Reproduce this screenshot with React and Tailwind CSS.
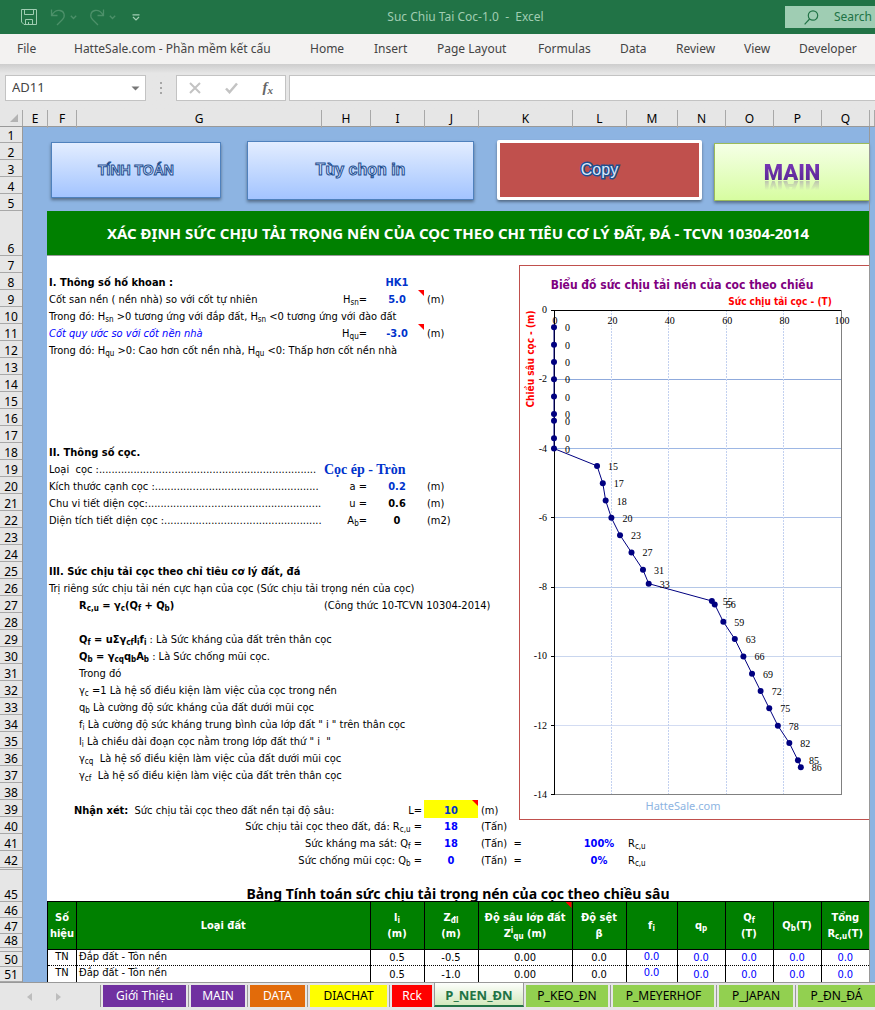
const COLS = 'grid grid-cols-[29px_minmax(0,1fr)_49px_54px_54px_94px_54px_51px_48px_48px_48px_48px]';
const INFO_COLS = 'grid grid-cols-[29px_minmax(0,1fr)_49px_54px_54px_41px]';

const COLUMN_LETTERS = ['F', 'G', 'H', 'I', 'J', 'K', 'L', 'M', 'N', 'O', 'P', 'Q'];

const range = (from, to) => Array.from({ length: to - from + 1 }, (_, i) => from + i);

const ROW_HEADERS = [
  { n: 1, h: 'h-[16px]' },
  ...range(2, 5).map((n) => ({ n, h: 'h-[17px]' })),
  { n: 6, h: 'h-[45px]' },
  ...range(7, 42).map((n) => ({ n, h: 'h-[17px]' })),
  { n: '', h: 'h-[2px]' },
  { n: 45, h: 'h-[32px]' },
  { n: 46, h: 'h-[16px]' },
  { n: 47, h: 'h-[16px]' },
  { n: 48, h: 'h-[14px]' },
  { n: '', h: 'h-[4px]' },
  { n: 50, h: 'h-[15px]' },
  { n: 51, h: 'h-[15px]' },
];

const MENU = [
  { label: 'File', cls: 'w-[57px] pl-[17px]' },
  { label: 'HatteSale.com - Phần mềm kết cấu', cls: 'w-[236px] pl-[17px]' },
  { label: 'Home', cls: 'w-[64px] pl-[17px]' },
  { label: 'Insert', cls: 'w-[63px] pl-[17px]' },
  { label: 'Page Layout', cls: 'w-[101px] pl-[17px]' },
  { label: 'Formulas', cls: 'w-[82px] pl-[17px]' },
  { label: 'Data', cls: 'w-[56px] pl-[17px]' },
  { label: 'Review', cls: 'w-[68px] pl-[17px]' },
  { label: 'View', cls: 'w-[55px] pl-[17px]' },
  { label: 'Developer', cls: 'w-[93px] pl-[17px]' },
];

const POINTS = [
  [0, 0.5], [0, 1], [0, 1.5], [0, 2], [0, 2.5], [0, 3], [0, 3.2], [0, 3.7], [0, 4],
  [15, 4.5], [17, 5], [18, 5.5], [20, 6], [23, 6.5], [27, 7], [31, 7.5], [33, 7.9],
  [55, 8.4], [56, 8.5], [59, 9], [63, 9.5], [66, 10], [69, 10.5], [72, 11], [75, 11.5],
  [78, 12], [82, 12.5], [85, 13], [86, 13.2],
];

const TABLE_ROWS = [
  ['TN', 'Đắp đất - Tôn nền', '0.5', '-0.5', '0.00', '0.0', '0.0', '0.0', '0.0', '0.0', '0.0'],
  ['TN', 'Đắp đất - Tôn nền', '0.5', '-1.0', '0.00', '0.0', '0.0', '0.0', '0.0', '0.0', '0.0'],
];

const SHEET_TABS = [
  { name: 'Giới Thiệu', cls: 'w-[83px] bg-[#7030a0] text-white' },
  { name: 'MAIN', cls: 'w-[54px] bg-[#7030a0] text-white' },
  { name: 'DATA', cls: 'w-[55px] bg-[#e26b0a] text-white' },
  { name: 'DIACHAT', cls: 'w-[77px] bg-[#ffff00] text-black' },
  { name: 'Rck', cls: 'w-[40px] bg-[#ff0000] text-white' },
];

const SHEET_TABS_AFTER = [
  { name: 'P_KEO_ĐN', cls: 'w-[82px]' },
  { name: 'P_MEYERHOF', cls: 'w-[101px]' },
  { name: 'P_JAPAN', cls: 'w-[74px]' },
  { name: 'P_ĐN_ĐÁ', cls: 'w-[77px]' },
];

function TitleBar() {
  return (
    <header className="flex h-[34px] items-center bg-[#217346] pl-5 text-[#a0cdb2]">
      <button aria-label="Save" className="h-[18px] w-[18px]">
        <svg viewBox="0 0 18 18" className="h-full w-full" fill="none" stroke="currentColor">
          <path d="M1.5 1.5h15v15H4L1.5 14zM4.5 1.5v5h9v-5M5.5 16.500v-5h7v5M8.500 16.500v-2.500" />
        </svg>
      </button>
      <button aria-label="Undo" className="ml-3 flex items-center gap-1 text-[#4c9069]">
        <svg width="16" height="18" viewBox="0 0 16 18" fill="none" stroke="currentColor" strokeWidth="1.3">
          <path d="M1.500 1.500v6h6M1.800 7.200C4 3.500 7 2 10 2.500c4.500.8 5.500 6 2.500 9L7 17" />
        </svg>
        <svg width="7" height="5" viewBox="0 0 7 5" fill="none" stroke="currentColor" strokeWidth="1.300">
          <path d="M.8.8l2.700 2.700L6.200.8" />
        </svg>
      </button>
      <button aria-label="Redo" className="ml-3 flex items-center gap-1 text-[#4c9069]">
        <svg width="16" height="18" viewBox="0 0 16 18" fill="none" stroke="currentColor" strokeWidth="1.3">
          <path d="M14.500 1.500v6h-6M14.200 7.200C12 3.500 9 2 6 2.500 1.500 3.300.5 8.500 3.500 11.500L9 17" />
        </svg>
        <svg width="7" height="5" viewBox="0 0 7 5" fill="none" stroke="currentColor" strokeWidth="1.300">
          <path d="M.8.8l2.700 2.700L6.200.8" />
        </svg>
      </button>
      <button aria-label="Customize Quick Access Toolbar" className="ml-4">
        <svg width="8" height="7" viewBox="0 0 8 7" fill="none" stroke="currentColor" strokeWidth="1.200">
          <path d="M.5.8h7M1 3l3 3 3-3" />
        </svg>
      </button>
      <h1 className="flex-1 pl-1.5 text-center text-[12px] whitespace-pre">Suc Chiu Tai Coc-1.0  -  Excel</h1>
      <label className="flex h-[22px] w-[90px] items-center bg-[#9fcdb3] pl-[19px] text-[#217346]">
        <svg width="15" height="15" viewBox="0 0 15 15" fill="none" stroke="currentColor" strokeWidth="1.200">
          <circle cx="9" cy="5.500" r="4.700" />
          <path d="M5.600 9L.6 14.300" />
        </svg>
        <input
          aria-label="Search"
          placeholder="Search"
          className="ml-[15px] w-[41px] text-[12px] outline-none placeholder:text-[#217346]"
        />
      </label>
    </header>
  );
}

function FormulaBar() {
  return (
    <div className="flex h-[46px] items-start bg-gradient-to-b from-[#cdcdcd] via-[#e6e6e6] via-20% to-[#e6e6e6] pt-[11px] pl-[5px]">
      <label className="flex h-[26px] w-[141px] items-center border border-[#c3c3c3] bg-white pr-[5px] pl-[6px]">
        <input aria-label="Name Box" defaultValue="AD11" className="min-w-0 flex-1 text-[13px] text-[#444] outline-none" />
        <svg width="9" height="5" viewBox="0 0 9 5" className="text-[#777]" fill="currentColor">
          <path d="M.5.5h8l-4 4z" />
        </svg>
      </label>
      <div className="flex h-[26px] w-[30px] flex-col items-center justify-center gap-[3px]">
        <span className="h-[2px] w-[2px] bg-[#a6a6a6]" />
        <span className="h-[2px] w-[2px] bg-[#a6a6a6]" />
        <span className="h-[2px] w-[2px] bg-[#a6a6a6]" />
      </div>
      <div className="flex h-[26px] w-[110px] items-center justify-between border border-[#c3c3c3] bg-white px-3">
        <button aria-label="Cancel">
          <svg width="12" height="12" viewBox="0 0 12 12" fill="none" stroke="#c3c3c3" strokeWidth="2">
            <path d="M1 1l10 10M11 1L1 11" />
          </svg>
        </button>
        <button aria-label="Enter">
          <svg width="13" height="12" viewBox="0 0 13 12" fill="none" stroke="#c3c3c3" strokeWidth="2.500">
            <path d="M1 6.500l3.500 3.700L12 1.500" />
          </svg>
        </button>
        <button className="pb-[2px] font-['Liberation_Serif',serif] text-[15px] leading-none font-bold text-[#666] italic">
          f<sub className="text-[11px]">x</sub>
        </button>
      </div>
      <input aria-label="Formula" className="ml-[3px] h-[26px] min-w-0 flex-1 border border-r-0 border-[#c3c3c3] bg-white outline-none" />
    </div>
  );
}

function ColumnHeaders() {
  const edge = 'border-l border-[#a8a8a8] text-center';
  return (
    <div className="flex h-[17px] border-b border-[#999] bg-[#e6e6e6] text-[12px] leading-[18px] text-black">
      <div className="flex w-[22px] items-end justify-end pr-1 pb-1">
        <svg width="8" height="8" viewBox="0 0 8 8" fill="#b3b3b3"><path d="M8 0v8H0z" /></svg>
      </div>
      <div className={`w-[25px] ${edge}`}>E</div>
      <div className={`flex-1 ${COLS}`}>
        {COLUMN_LETTERS.map((c) => (
          <div key={c} className={edge}>{c}</div>
        ))}
      </div>
      <div className="w-[6px] border-x border-[#a8a8a8]" />
    </div>
  );
}

function RowHeaders() {
  return (
    <div className="w-[23px] shrink-0 border-r border-[#999] bg-[#e6e6e6] text-center text-[12px] leading-[12px] text-black">
      {ROW_HEADERS.map((r, i) => (
        <div key={i} className={`flex items-end justify-center border-b border-[#a8a8a8] ${r.h}`}>
          {r.n}
        </div>
      ))}
    </div>
  );
}

function MacroButtons() {
  const outline =
    "font-['Liberation_Sans',sans-serif] text-[#d6e3ff] [-webkit-text-stroke:1px_#1f4f8f] font-bold";
  const blue = 'border border-[#4f81bd] bg-gradient-to-b from-[#e3edff] to-[#a3c4ff] shadow-[0_2px_3px_rgba(0,0,0,0.4)]';
  return (
    <div className="flex h-[84px] items-center pt-[2px] pl-1">
      <button className={`h-[56px] grow basis-[170px] text-[14px] ${blue} ${outline}`}>TÍNH TOÁN</button>
      <button className={`ml-[26px] h-[59px] grow basis-[227px] text-[16px] ${blue} ${outline}`}>Tùy chọn in</button>
      <button className="ml-[23px] h-[60px] grow basis-[205px] rounded-[2px] border-[3px] border-white bg-[#c0504d] font-['Liberation_Sans',sans-serif] text-[16px] text-[#dbe8fb] shadow-[0_2px_3px_rgba(0,0,0,0.4)] [-webkit-text-stroke:3px_#1f4f8f] [paint-order:stroke]">
        Copy
      </button>
      <button className="mt-1 ml-3 h-[58px] grow basis-[155px] border border-r-0 border-[#9bbb59] bg-gradient-to-b from-[#f5ffe6] to-[#d7fda0] font-['Roboto',sans-serif] text-[22px] font-black shadow-[0_2px_3px_rgba(0,0,0,0.4)]">
        <span className="inline-block bg-gradient-to-b from-[#7a36b8] to-[#55278f] bg-clip-text leading-[22px] text-transparent [-webkit-box-reflect:below_-7px_linear-gradient(transparent_40%,rgba(0,0,0,0.4))]">
          MAIN
        </span>
      </button>
    </div>
  );
}

function Note() {
  return <span className="absolute top-0 right-0 h-[6px] w-[6px] bg-[#ff0000] [clip-path:polygon(0_0,100%_0,100%_100%)]" />;
}

function Row({ children }) {
  return <div className={`${INFO_COLS} h-[17px] items-end leading-[14px] whitespace-pre`}>{children}</div>;
}

function Text({ children, indent, className = '' }) {
  return (
    <div className={`${indent ? 'col-start-2 pl-[3px]' : 'col-start-1 pl-[2px]'} row-start-1 w-0 ${className}`}>
      {children}
    </div>
  );
}

function Param({ label, value, unit, note, valueClass = 'text-[#0033cc]' }) {
  return (
    <>
      <div className="col-start-3 row-start-1 pr-[3px] text-right">{label}</div>
      <div className={`relative col-start-4 row-start-1 self-stretch pt-[3px] text-center font-bold ${valueClass}`}>
        {value}
        {note && <Note />}
      </div>
      <div className="col-start-5 row-start-1 pl-[3px]">{unit}</div>
    </>
  );
}

function Info() {
  return (
    <section className="min-w-0 flex-1">
      <Row />
      <Row>
        <Text className="font-bold">I. Thông số hố khoan :</Text>
        <Param value="HK1" />
      </Row>
      <Row>
        <Text>Cốt san nền ( nền nhà) so với cốt tự nhiên</Text>
        <Param label={<>H<sub>sn</sub>=</>} value="5.0" unit="(m)" note />
      </Row>
      <Row><Text>Trong đó: H<sub>sn</sub> &gt;0 tương ứng với đắp đất, H<sub>sn</sub> &lt;0 tương ứng với đào đất</Text></Row>
      <Row>
        <Text className="text-[#0000ff] italic">Cốt quy ước so với cốt nền nhà</Text>
        <Param label={<>H<sub>qu</sub>=</>} value="-3.0" unit="(m)" note />
      </Row>
      <Row><Text>Trong đó: H<sub>qu</sub> &gt;0: Cao hơn cốt nền nhà, H<sub>qu</sub> &lt;0: Thấp hơn cốt nền nhà</Text></Row>
      {range(13, 17).map((n) => <Row key={n} />)}
      <Row><Text className="font-bold">II. Thông số cọc.</Text></Row>
      <Row>
        <Text>Loại  cọc :.....................….............................................</Text>
        <div className="col-start-3 w-0 pl-[3px] font-['Liberation_Serif',serif] text-[14px] font-bold text-[#0033cc]">Cọc ép - Tròn</div>
      </Row>
      <Row>
        <Text>Kích thước cạnh cọc :............….....................................</Text>
        <Param label="a =" value="0.2" unit="(m)" />
      </Row>
      <Row>
        <Text>Chu vi tiết diện cọc:..................…..................................</Text>
        <Param label="u =" value="0.6" unit="(m)" valueClass="text-black" />
      </Row>
      <Row>
        <Text>Diện tích tiết diện cọc :.......................…........................</Text>
        <Param label={<>A<sub>b</sub>=</>} value="0" unit="(m2)" valueClass="text-black" />
      </Row>
      <Row />
      <Row />
      <Row><Text className="font-bold">III. Sức chịu tải cọc theo chỉ tiêu cơ lý đất, đá</Text></Row>
      <Row><Text>Trị riêng sức chịu tải nén cực hạn của cọc (Sức chịu tải trọng nén của cọc)</Text></Row>
      <Row>
        <Text indent className="font-bold">R<sub>c,u</sub> = γ<sub>c</sub>(Q<sub>f</sub> + Q<sub>b</sub>)</Text>
        <div className="col-start-3 w-0 pl-[3px]">(Công thức 10-TCVN 10304-2014)</div>
      </Row>
      <Row />
      <Row><Text indent><b>Q<sub>f</sub> = uΣγ<sub>cf</sub>l<sub>i</sub>f<sub>i</sub></b> : Là Sức kháng của đất trên thân cọc</Text></Row>
      <Row><Text indent><b>Q<sub>b</sub> = γ<sub>cq</sub>q<sub>b</sub>A<sub>b</sub></b> : Là Sức chống mũi cọc.</Text></Row>
      <Row><Text indent>Trong đó</Text></Row>
      <Row><Text indent>γ<sub>c</sub> =1 Là hệ số điều kiện làm việc của cọc trong nền</Text></Row>
      <Row><Text indent>q<sub>b</sub> Là cường độ sức kháng của đất dưới mũi cọc</Text></Row>
      <Row><Text indent>f<sub>i</sub> Là cường độ sức kháng trung bình của lớp đất " i " trên thân cọc</Text></Row>
      <Row><Text indent>l<sub>i</sub> Là chiều dài đoạn cọc nằm trong lớp đất thứ " i  "</Text></Row>
      <Row><Text indent>γ<sub>cq</sub>  Là hệ số điều kiện làm việc của đất dưới mũi cọc</Text></Row>
      <Row><Text indent>γ<sub>cf</sub>  Là hệ số điều kiện làm việc của đất trên thân cọc</Text></Row>
      <Row />
      <Row>
        <div className="col-start-1 w-0 pl-[27px]"><b>Nhận xét:</b>  Sức chịu tải cọc theo đất nền tại độ sâu:</div>
        <div className="col-start-4 pr-[2px] text-right">L=</div>
        <div className="relative col-start-5 self-stretch bg-[#ffff00] pt-[4px] text-center font-bold text-[#0033cc]">
          10
          <Note />
        </div>
        <div className="col-start-6 pl-[3px]">(m)</div>
      </Row>
    </section>
  );
}

function Chart() {
  const left = 35;
  const top = 45;
  const px = (v) => left + v * 2.87;
  const py = (d) => top + d * 34.64;
  const rules = { 2: '#8faadc', 4: '#9db7e4', 6: '#a9bfe8', 8: '#b4c7e7', 10: '#c9d6ee', 12: '#d3dcf2' };
  return (
    <div className="z-10 mt-[9px] -mb-[3px] w-[350px] shrink-0 border-y border-l border-[#c0504d] bg-white">
      <svg width="349" height="553" viewBox="1 1 349 553" role="img" aria-label="Biểu đồ sức chịu tải nén của cọc">
        <g shapeRendering="crispEdges">
          {Object.entries(rules).map(([d, color]) => (
            <line key={d} x1={left} x2={px(100)} y1={py(d)} y2={py(d)} stroke={color} />
          ))}
          {[20, 40, 60, 80].map((v) => (
            <line key={v} x1={px(v)} x2={px(v)} y1={top} y2={py(14)} stroke="#c3d1f0" strokeDasharray="2 1" />
          ))}
          <path d={`M${px(100)} ${top}V${py(14)}H${left}`} fill="none" stroke="#808080" />
          <path d={`M${px(100)} ${top}H${left}V${py(14)}`} fill="none" stroke="#000" />
          {[0, 2, 4, 6, 8, 10, 12, 14].map((d) => (
            <line key={d} x1={left - 3} x2={left + 1} y1={py(d)} y2={py(d)} stroke="#000" />
          ))}
        </g>
        <polyline points={POINTS.map(([v, d]) => `${px(v)},${py(d)}`).join(' ')} fill="none" stroke="#000080" />
        <g fontFamily="Liberation Serif, serif" fontSize="10">
          {[0, 20, 40, 60, 80, 100].map((v) => (
            <text key={v} x={px(v) + 1} y={top + 14} textAnchor="middle">{v}</text>
          ))}
          {[0, 2, 4, 6, 8, 10, 12, 14].map((d) => (
            <text key={d} x={left - 7} y={py(d) + 3} textAnchor="end">{d ? -d : 0}</text>
          ))}
          {POINTS.map(([v, d]) => (
            <text key={d} x={px(v) + 11} y={py(d) + 4}>{v}</text>
          ))}
        </g>
        {POINTS.map(([v, d]) => (
          <circle key={d} cx={px(v)} cy={py(d)} r="3" fill="#000080" />
        ))}
        <g fontFamily="DejaVu Sans Condensed, DejaVu Sans, sans-serif" fontWeight="bold">
          <text x="163" y="24" fontSize="12" textAnchor="middle" fill="#800080">Biểu đồ sức chịu tải nén của coc theo chiều</text>
          <text x="261" y="40" fontSize="10" textAnchor="middle" fill="#ff0000">Sức chịu tải cọc - (T)</text>
          <text transform="translate(15 94) rotate(-90)" fontSize="10" textAnchor="middle" fill="#ff0000">Chiều sâu cọc - (m)</text>
        </g>
        <text x="164" y="545" fontFamily="Noto Sans, sans-serif" fontSize="11" textAnchor="middle" fill="#8db4e2">HatteSale.com</text>
      </svg>
    </div>
  );
}

function ResultRow({ label, value, unit = '(Tấn)', share }) {
  return (
    <div className={`${COLS} h-[17px] items-end leading-[14px] whitespace-pre`}>
      <div className="col-span-4 pr-[2px] text-right">{label}</div>
      <div className="text-center font-bold text-[#0000ff]">{value}</div>
      <div className="pl-[3px]">{unit}{share && '  ='}</div>
      <div className="text-center font-bold text-[#0000ff]">{share}</div>
      <div className="pl-[2px]">{share && <>R<sub>c,u</sub></>}</div>
    </div>
  );
}

function SoilTable() {
  const th = 'relative border-r border-black p-0 text-center align-middle font-bold last:border-r-0';
  return (
    <table className="w-full table-fixed border-collapse border-t border-l border-black">
      <colgroup>
        <col className="w-[29px]" />
        <col />
        <col className="w-[54px]" />
        <col className="w-[54px]" />
        <col className="w-[94px]" />
        <col className="w-[54px]" />
        <col className="w-[51px]" />
        <col className="w-[48px]" />
        <col className="w-[48px]" />
        <col className="w-[48px]" />
        <col className="w-[48px]" />
      </colgroup>
      <thead>
        <tr className="h-[48px] border-b border-black bg-[#008000] leading-[16px] text-white">
          <th className={th}>Số<br />hiệu</th>
          <th className={th}>Loại đất</th>
          <th className={th}>l<sub>i</sub><br />(m)</th>
          <th className={th}>Z<sub>đl</sub><br />(m)</th>
          <th className={th}>Độ sâu lớp đất<br />Z<sup>i</sup><sub>qu</sub> (m)<Note /></th>
          <th className={th}>Độ sệt<br />β</th>
          <th className={th}>f<sub>i</sub></th>
          <th className={th}>q<sub>p</sub></th>
          <th className={th}>Q<sub>f</sub><br />(T)</th>
          <th className={th}>Q<sub>b</sub>(T)</th>
          <th className={th}>Tổng<br />R<sub>c,u</sub>(T)</th>
        </tr>
      </thead>
      <tbody>
        {TABLE_ROWS.map((cells, r) => (
          <tr key={r} className="h-[16px] border-b border-dotted border-black leading-[14px] last:border-b-0">
            {cells.map((c, i) => (
              <td
                key={i}
                className={`border-r border-r-black p-0 [border-right-style:solid] last:border-r-0 ${
                  i === 1 ? 'pl-[2px]' : 'text-center'
                } ${[0, 1, 6].includes(i) ? 'align-top' : 'align-bottom'} ${i > 5 ? 'text-[#0000ff]' : ''}`}
              >
                {c}
              </td>
            ))}
          </tr>
        ))}
      </tbody>
    </table>
  );
}

function SheetTabs() {
  const tab = 'h-[22px] whitespace-nowrap text-center';
  return (
    <nav className="flex h-[28px] overflow-hidden border-t border-[#999] bg-[#e6e6e6] text-[12px]">
      <div className="flex w-[100px] shrink-0 items-center gap-[24px] pl-[27px]">
        <button aria-label="Previous sheet">
          <svg width="5" height="8" viewBox="0 0 5 8" fill="#bdbdbd"><path d="M5 0v8L0 4z" /></svg>
        </button>
        <button aria-label="Next sheet">
          <svg width="5" height="8" viewBox="0 0 5 8" fill="#bdbdbd"><path d="M0 0v8l5-4z" /></svg>
        </button>
      </div>
      {SHEET_TABS.map((t) => (
        <div key={t.name} className="shrink-0 py-[2px] pr-[2px]">
          <div className="border-l border-[#999] pl-[2px]">
            <button className={`${tab} ${t.cls}`}>{t.name}</button>
          </div>
        </div>
      ))}
      <button className="-mt-px h-[25px] w-[90px] shrink-0 border-x border-b-2 border-x-[#999] border-b-[#217346] bg-gradient-to-b from-white to-[#d3e9bd] pt-1 text-[13px] font-bold text-[#217346]">
        P_NEN_ĐN
      </button>
      {SHEET_TABS_AFTER.map((t, i) => (
        <div key={t.name} className="shrink-0 py-[2px] pr-[2px]">
          <div className={i ? 'border-l border-[#999] pl-[2px]' : 'pl-[2px]'}>
            <button className={`${tab} bg-[#92d050] text-black ${t.cls}`}>{t.name}</button>
          </div>
        </div>
      ))}
    </nav>
  );
}

export default function App() {
  return (
    <div className="min-w-[875px] overflow-hidden bg-[#e6e6e6] font-['Noto_Sans',sans-serif]">
      <TitleBar />
      <nav className="flex h-[30px] items-center bg-[#f3f2f1] text-[12px] text-[#444]">
        {MENU.map((m) => (
          <button key={m.label} className={`shrink-0 text-left whitespace-nowrap ${m.cls}`}>{m.label}</button>
        ))}
      </nav>
      <FormulaBar />
      <ColumnHeaders />
      <main className="flex bg-[#8db4e2]">
        <RowHeaders />
        <div className="ml-6 min-w-0 flex-1 font-['DejaVu_Sans_Condensed','DejaVu_Sans',sans-serif] text-[11px] text-black [&_sub]:text-[8px] [&_sup]:text-[8px]">
          <MacroButtons />
          <h2 className="flex h-[45px] items-center justify-center border-b border-[#999] bg-[#008000] font-['Noto_Sans',sans-serif] text-[15px] font-bold text-white">
            XÁC ĐỊNH SỨC CHỊU TẢI TRỌNG NÉN CỦA CỌC THEO CHI TIÊU CƠ LÝ ĐẤT, ĐÁ - TCVN 10304-2014
          </h2>
          <div className="bg-white">
            <div className="flex">
              <Info />
              <Chart />
            </div>
            <ResultRow label={<>Sức chịu tải cọc theo đất, đá: R<sub>c,u</sub> =</>} value="18" />
            <ResultRow label={<>Sức kháng ma sát: Q<sub>f</sub> =</>} value="18" share="100%" />
            <ResultRow label={<>Sức chống mũi cọc: Q<sub>b</sub> =</>} value="0" share="0%" />
            <h3 className="flex h-[33px] items-end justify-center font-['Noto_Sans',sans-serif] text-[14px] leading-[14px] font-bold">
              Bảng Tính toán sức chịu tải trọng nén của cọc theo chiều sâu
            </h3>
            <SoilTable />
          </div>
        </div>
        <div className="w-[6px] shrink-0 border-l border-[#999]" />
      </main>
      <SheetTabs />
    </div>
  );
}
